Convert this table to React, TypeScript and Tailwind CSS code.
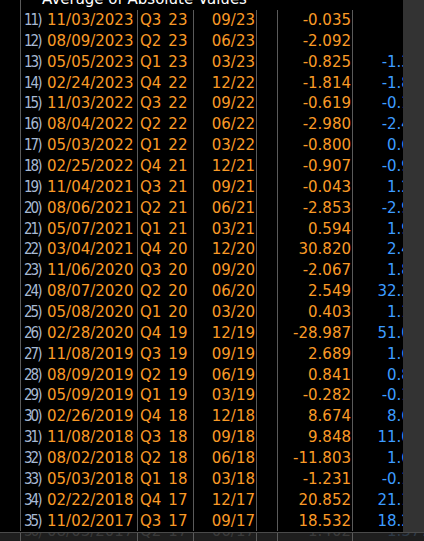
const rows: [string, string, string, string, string, string][] = [
  ["11)", "11/03/2023", "Q3 23", "09/23", "-0.035", ""],
  ["12)", "08/09/2023", "Q2 23", "06/23", "-2.092", ""],
  ["13)", "05/05/2023", "Q1 23", "03/23", "-0.825", "-1.342"],
  ["14)", "02/24/2023", "Q4 22", "12/22", "-1.814", "-1.861"],
  ["15)", "11/03/2022", "Q3 22", "09/22", "-0.619", "-0.174"],
  ["16)", "08/04/2022", "Q2 22", "06/22", "-2.980", "-2.415"],
  ["17)", "05/03/2022", "Q1 22", "03/22", "-0.800", "0.612"],
  ["18)", "02/25/2022", "Q4 21", "12/21", "-0.907", "-0.953"],
  ["19)", "11/04/2021", "Q3 21", "09/21", "-0.043", "1.204"],
  ["20)", "08/06/2021", "Q2 21", "06/21", "-2.853", "-2.916"],
  ["21)", "05/07/2021", "Q1 21", "03/21", "0.594", "1.933"],
  ["22)", "03/04/2021", "Q4 20", "12/20", "30.820", "2.447"],
  ["23)", "11/06/2020", "Q3 20", "09/20", "-2.067", "1.810"],
  ["24)", "08/07/2020", "Q2 20", "06/20", "2.549", "32.215"],
  ["25)", "05/08/2020", "Q1 20", "03/20", "0.403", "1.126"],
  ["26)", "02/28/2020", "Q4 19", "12/19", "-28.987", "51.084"],
  ["27)", "11/08/2019", "Q3 19", "09/19", "2.689", "1.653"],
  ["28)", "08/09/2019", "Q2 19", "06/19", "0.841", "0.837"],
  ["29)", "05/09/2019", "Q1 19", "03/19", "-0.282", "-0.171"],
  ["30)", "02/26/2019", "Q4 18", "12/18", "8.674", "8.602"],
  ["31)", "11/08/2018", "Q3 18", "09/18", "9.848", "11.027"],
  ["32)", "08/02/2018", "Q2 18", "06/18", "-11.803", "1.609"],
  ["33)", "05/03/2018", "Q1 18", "03/18", "-1.231", "-0.118"],
  ["34)", "02/22/2018", "Q4 17", "12/17", "20.852", "21.130"],
  ["35)", "11/02/2017", "Q3 17", "09/17", "18.532", "18.240"],
];

function Row({ r, faded }: { r: (typeof rows)[number]; faded?: boolean }) {
  const num = faded ? "text-[#3a3a3a]" : "text-[#a7bad4]";
  const amber = faded ? "text-[#3a3a3a]" : "text-[#fa9a26]";
  const blue = faded ? "text-[#2e3a48]" : "text-[#3d9cff]";
  return (
    <div className="flex h-[20.86px] shrink-0 items-center leading-none">
      <div className="w-[20px] shrink-0" />
      <div className="flex h-full w-[118px] shrink-0 items-center border-x border-[#5a5a5a]">
        <span
          className={`w-[26px] pl-[3px] text-[15px] tracking-[-2px] ${num}`}
          style={{ fontFamily: '"DejaVu Sans Condensed", "DejaVu Sans", sans-serif' }}
        >
          {r[0]}
        </span>
        <span className={amber}>{r[1]}</span>
      </div>
      <div className={`flex h-full w-[56px] shrink-0 items-center border-r border-[#5a5a5a] pl-[2px] ${amber}`}>
        {r[2].split(" ")[0]}
        <span className="ml-[7px]">{r[2].split(" ")[1]}</span>
      </div>
      <div className={`flex h-full w-[63px] shrink-0 items-center justify-end border-r border-[#5a5a5a] pr-[1px] ${amber}`}>
        {r[3]}
      </div>
      <div className="h-full w-[21px] shrink-0 border-r border-[#5a5a5a]" />
      <div className={`flex h-full w-[75px] shrink-0 items-center justify-end border-r border-[#5a5a5a] pr-[1px] ${amber}`}>
        {r[4]}
      </div>
      <div className={`flex h-full w-[78px] shrink-0 items-center justify-end pr-[1px] ${blue}`}>{r[5]}</div>
    </div>
  );
}

export default function App() {
  return (
    <div
      className="flex h-[541px] w-[424px] flex-col overflow-hidden bg-black text-[15px]"
      style={{ fontFamily: '"DejaVu Sans", Verdana, sans-serif' }}
    >
      <div className="flex h-[532px] shrink-0">
        <div className="flex w-[403px] shrink-0 flex-col overflow-hidden">
          {/* header, scrolled partly off the top */}
          <div className="-mt-[11px] flex h-[21px] shrink-0 items-center leading-none">
            <div className="h-full w-[20px] shrink-0" />
            <div className="h-full shrink-0 border-l border-[#5a5a5a] pl-[21px] leading-[21px] text-white whitespace-nowrap">
              Average of Absolute Values
            </div>
          </div>
          {rows.map((r) => (
            <Row key={r[0]} r={r} />
          ))}
        </div>
        <div className="flex-1 bg-[#333333]" />
      </div>
      {/* bottom strip with the next row peeking */}
      <div className="flex-1 overflow-hidden border-t border-[#4a4a4a] bg-[#1e1e1e]">
        <div className="-mt-[12px]">
          <Row r={["36)", "08/03/2017", "Q2 17", "06/17", "1.402", "1.377"]} faded />
        </div>
      </div>
    </div>
  );
}
